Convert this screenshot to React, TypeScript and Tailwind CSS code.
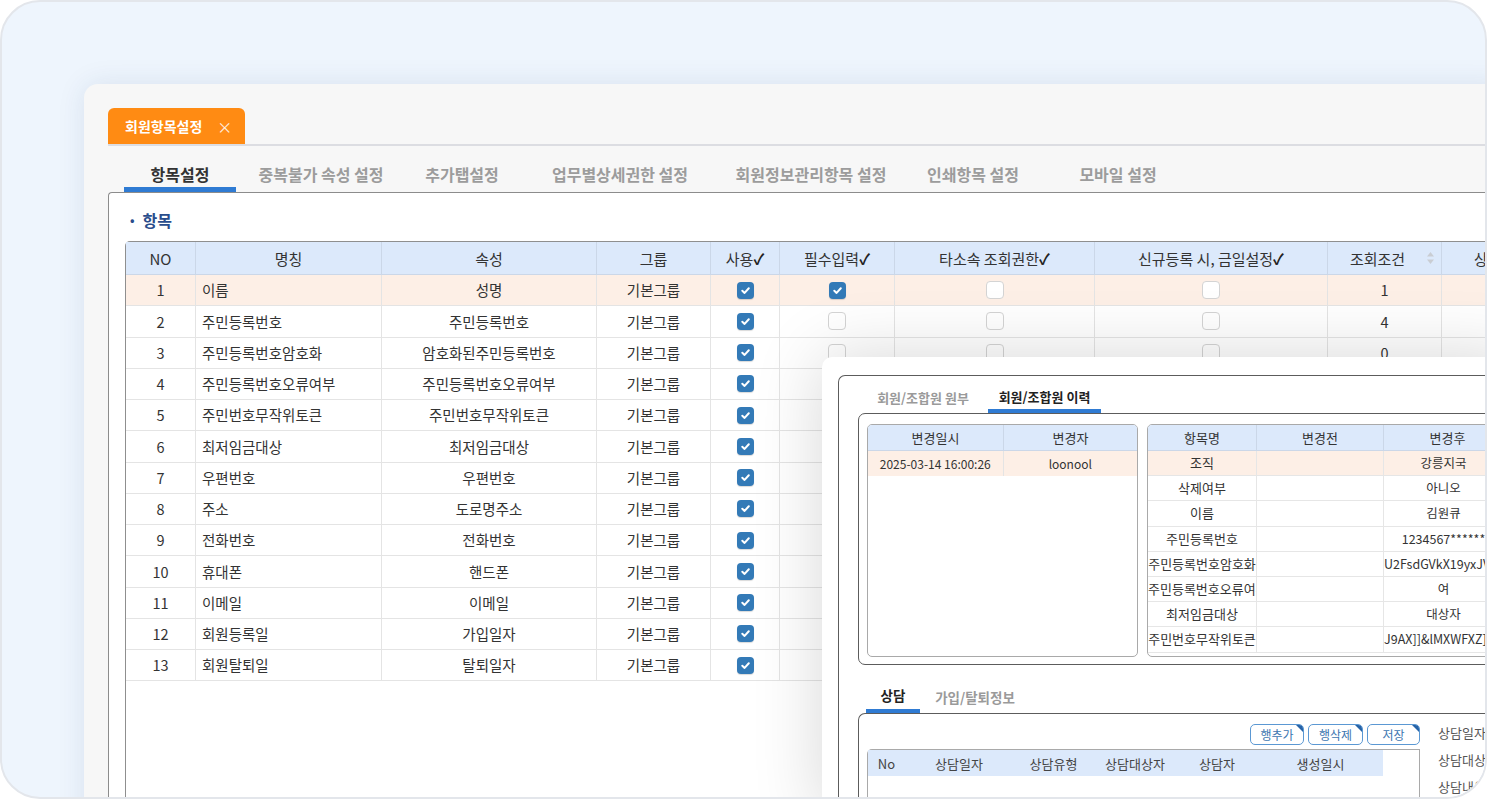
import React from 'react';

const FONT = { fontFamily: '"Noto Sans CJK KR", "Noto Sans", "Liberation Sans", sans-serif' };

const subTabs = [
  { label: '항목설정', w: 'w-[112px]', active: true },
  { label: '중복불가 속성 설정', w: 'w-[170px]' },
  { label: '추가탭설정', w: 'w-[112px]' },
  { label: '업무별상세권한 설정', w: 'w-[204px]' },
  { label: '회원정보관리항목 설정', w: 'w-[178px]' },
  { label: '인쇄항목 설정', w: 'w-[146px]' },
  { label: '모바일 설정', w: 'w-[144px]' },
];

const cols = [
  { label: 'NO', w: 'w-[70px]' },
  { label: '명칭', w: 'w-[186px]' },
  { label: '속성', w: 'w-[215px]' },
  { label: '그룹', w: 'w-[114px]' },
  { label: '사용', w: 'w-[69px]', check: true },
  { label: '필수입력', w: 'w-[115px]', check: true },
  { label: '타소속 조회권한', w: 'w-[200px]', check: true },
  { label: '신규등록 시, 금일설정', w: 'w-[233px]', check: true },
  { label: '조회조건', w: 'w-[114px]', sort: true },
  { label: '상세설정', w: 'w-[120px]' },
];

const rows = [
  ['1', '이름', '성명', '1'],
  ['2', '주민등록번호', '주민등록번호', '4'],
  ['3', '주민등록번호암호화', '암호화된주민등록번호', '0'],
  ['4', '주민등록번호오류여부', '주민등록번호오류여부', '0'],
  ['5', '주민번호무작위토큰', '주민번호무작위토큰', '0'],
  ['6', '최저임금대상', '최저임금대상', '0'],
  ['7', '우편번호', '우편번호', '0'],
  ['8', '주소', '도로명주소', '0'],
  ['9', '전화번호', '전화번호', '0'],
  ['10', '휴대폰', '핸드폰', '0'],
  ['11', '이메일', '이메일', '0'],
  ['12', '회원등록일', '가입일자', '0'],
  ['13', '회원탈퇴일', '탈퇴일자', '0'],
];

const history = [
  ['조직', '', '강릉지국'],
  ['삭제여부', '', '아니오'],
  ['이름', '', '김원큐'],
  ['주민등록번호', '', '1234567******'],
  ['주민등록번호암호화', '', 'U2FsdGVkX19yxJVyQk2mZ8'],
  ['주민등록번호오류여부', '', '여'],
  ['최저임금대상', '', '대상자'],
  ['주민번호무작위토큰', '', 'J9AX]]&lMXWFXZ]Q8kP'],
];

const Check = ({ on }: { on: boolean }) =>
  on ? (
    <span className="flex h-[17px] w-[17px] items-center justify-center rounded-[4px] bg-[#337ab7] shadow-[0_1px_1px_rgba(0,0,0,0.15)]">
      <svg className="h-[11px] w-[11px]" viewBox="0 0 12 12" fill="none" stroke="white" strokeWidth="2.2" strokeLinecap="round" strokeLinejoin="round">
        <path d="M2.5 6.3 5 8.6 9.6 3.6" />
      </svg>
    </span>
  ) : (
    <span className="block h-[18px] w-[18px] rounded-[4px] border border-[#d4d4d4] bg-white" />
  );

const MainPanel = () => (
  <div className="flex h-[760px] w-[1420px] flex-col rounded-tl-[14px] bg-[#f7f7f7] pl-[24px] pt-[24px] shadow-[0_0_28px_rgba(30,60,110,0.10)]">
    {/* 상단 탭 */}
    <div className="flex h-[38px] border-b-2 border-[#dcdde2]">
      <div className="flex h-[36px] w-[137px] items-center rounded-t-[6px] bg-[#ff8b13] pl-[17px] text-[14px] font-bold text-white">
        <span className="leading-none">회원항목설정</span>
        <span className="ml-[15px] text-[15px] font-normal leading-none text-[#fff1e2]">×</span>
      </div>
    </div>

    {/* 서브 탭 */}
    <div className="flex h-[46px] pl-[16px]">
      {subTabs.map((t) => (
        <div key={t.label} className={`relative flex h-full items-center justify-center pt-[10px] ${t.w}`}>
          <span className={`text-[16px] font-bold leading-none ${t.active ? 'text-[#333]' : 'text-[#9c9c9c]'}`}>{t.label}</span>
          {t.active && <span className="absolute bottom-0 left-0 h-[5px] w-full bg-[#2f7bd3]" />}
        </div>
      ))}
    </div>

    {/* 내용 */}
    <div className="flex-1 rounded-tl-[4px] border-l border-t border-[#8c8c8c] bg-white pl-[16px] pt-[15px]">
      <div className="mb-[9px] flex h-[24px] items-center pl-[5px] text-[16px] font-bold text-[#2a4d8c]">
        <span className="mr-[8px] text-[12px]">•</span>
        <span className="leading-none">항목</span>
      </div>

      <div className="h-[600px] rounded-tl-[5px] border-l border-t border-[#8f8f8f]">
        <div className="flex h-[33px] bg-[#dce9fb]">
          {cols.map((c) => (
            <div
              key={c.label}
              className={`relative flex shrink-0 items-center justify-center border-r border-b border-[#cbd7e8] text-[15px] text-[#333] ${c.w} ${c.sort ? 'pr-[14px]' : ''}`}
            >
              <span className="whitespace-nowrap leading-none">
                {c.label}
                {c.check && <span className="font-bold text-[#222]">✓</span>}
              </span>
              {c.sort && (
                <svg className="absolute right-[7px] top-1/2 h-[12px] w-[7px] -translate-y-1/2" viewBox="0 0 7 12" fill="#c9cdd3">
                  <path d="M3.5 0 7 4.5H0Z" />
                  <path d="M3.5 12 0 7.5H7Z" />
                </svg>
              )}
            </div>
          ))}
        </div>
        {rows.map((r, i) => (
          <div key={r[0]} className={`flex h-[31.25px] text-[14.5px] text-[#333] ${i === 0 ? 'bg-[#fdefe6]' : 'bg-transparent'}`}>
            <div className="flex w-[70px] shrink-0 items-center justify-center border-b border-r border-[#e4e4e4]">{r[0]}</div>
            <div className="flex w-[186px] shrink-0 items-center border-b border-r border-[#e4e4e4] pl-[6px]">{r[1]}</div>
            <div className="flex w-[215px] shrink-0 items-center justify-center border-b border-r border-[#e4e4e4]">{r[2]}</div>
            <div className="flex w-[114px] shrink-0 items-center justify-center border-b border-r border-[#e4e4e4]">기본그룹</div>
            <div className="flex w-[69px] shrink-0 items-center justify-center border-b border-r border-[#e4e4e4]">
              <Check on />
            </div>
            <div className="flex w-[115px] shrink-0 items-center justify-center border-b border-r border-[#e4e4e4]">
              <Check on={i === 0} />
            </div>
            <div className="flex w-[200px] shrink-0 items-center justify-center border-b border-r border-[#e4e4e4]">
              <Check on={false} />
            </div>
            <div className="flex w-[233px] shrink-0 items-center justify-center border-b border-r border-[#e4e4e4]">
              <Check on={false} />
            </div>
            <div className="flex w-[114px] shrink-0 items-center justify-center border-b border-r border-[#e4e4e4]">{r[3]}</div>
            <div className="w-[120px] shrink-0 border-b border-r border-[#e4e4e4]" />
          </div>
        ))}
      </div>
    </div>
  </div>
);

const GridHead = ({ items }: { items: [string, string][] }) => (
  <div className="flex h-[26px]">
    {items.map(([label, w]) => (
      <div key={label} className={`flex shrink-0 items-center justify-center border-b border-r border-[#cbd7e8] bg-[#dce9fb] text-[13px] text-[#333] ${w}`}>
        <span className="leading-none">{label}</span>
      </div>
    ))}
  </div>
);

const HistoryPanel = () => (
  <div className="absolute left-[820px] top-[355px] h-[460px] w-[700px] rounded-tl-[10px] bg-white pl-[16px] pt-[18px] shadow-[0_0_70px_rgba(0,0,0,0.16)]">
    <div className="h-full rounded-tl-[7px] border-l border-t border-[#5c5c5c] pl-[19px]">
      {/* 원부 / 이력 탭 */}
      <div className="flex h-[37px]">
        <div className="flex w-[130px] items-center justify-center pt-[6px] text-[13px] font-bold text-[#9a9a9a]">
          <span className="leading-none">회원/조합원 원부</span>
        </div>
        <div className="relative flex w-[113px] items-center justify-center pt-[4px] text-[13px] font-bold text-[#222]">
          <span className="leading-none">회원/조합원 이력</span>
          <span className="absolute bottom-0 left-0 h-[4px] w-full bg-[#2f7bd3]" />
        </div>
      </div>

      <div className="flex h-[252px] gap-[9px] rounded-[7px] border border-[#5c5c5c] pb-[7px] pl-[8px] pt-[10px]">
        <div className="h-[233px] w-[271px] shrink-0 overflow-hidden rounded-[5px] border border-[#a9a9a9]">
          <GridHead items={[['변경일시', 'w-[136px]'], ['변경자', 'w-[134px]']]} />
          <div className="flex h-[25px] bg-[#fdefe6] text-[12px] text-[#333]">
            <div className="flex w-[136px] items-center justify-center border-r border-[#e4e4e4]">2025-03-14 16:00:26</div>
            <div className="flex w-[134px] items-center justify-center">loonool</div>
          </div>
        </div>
        <div className="h-[233px] w-[420px] shrink-0 overflow-hidden rounded-[5px] border border-[#a9a9a9]">
          <GridHead items={[['항목명', 'w-[109px]'], ['변경전', 'w-[127px]'], ['변경후', 'w-[128px]']]} />
          {history.map((h, i) => (
            <div key={h[0]} className={`flex h-[25.2px] text-[13px] text-[#333] ${i === 0 ? 'bg-[#fdefe6]' : ''}`}>
              <div className="w-[109px] shrink-0 overflow-hidden whitespace-nowrap border-b border-r border-[#e6e6e6] text-center leading-[24px]">{h[0]}</div>
              <div className="w-[127px] shrink-0 border-b border-r border-[#e6e6e6]" />
              <div className="w-[128px] shrink-0 overflow-hidden whitespace-nowrap border-b border-r border-[#e6e6e6] pr-[8px] text-center text-[12.5px] leading-[24px]">{h[2]}</div>
            </div>
          ))}
        </div>
      </div>

      {/* 상담 탭 */}
      <div className="flex h-[48px] pl-[8px]">
        <div className="relative flex w-[54px] items-end justify-center pb-[11px] text-[13.5px] font-bold text-[#222]">
          <span className="leading-none">상담</span>
          <span className="absolute bottom-0 left-0 h-[4px] w-full bg-[#2f7bd3]" />
        </div>
        <div className="flex w-[110px] items-end justify-center pb-[9px] text-[13.5px] font-bold text-[#9a9a9a]">
          <span className="leading-none">가입/탈퇴정보</span>
        </div>
      </div>

      <div className="flex h-[120px] rounded-tl-[7px] border-l border-t border-[#5c5c5c] pl-[8px]">
        <div className="w-[553px] shrink-0 pt-[10px]">
          <div className="flex justify-end gap-[4px]">
            {[['행추가', 'w-[54px]'], ['행삭제', 'w-[55px]'], ['저장', 'w-[53px]']].map(([b, w]) => (
              <div key={b} className={`relative flex h-[21px] items-center justify-center overflow-hidden rounded-[5px] border border-[#5b98d3] text-[12px] text-[#3d76b0] ${w}`}>
                <span className="leading-none">{b}</span>
                <span className="absolute right-0 top-0 h-0 w-0 border-l-[7px] border-t-[7px] border-l-transparent border-t-[#2563a8]" />
              </div>
            ))}
          </div>
          <div className="mt-[4px] h-[80px] rounded-tl-[5px] border-l border-r border-t border-[#a9a9a9]">
            <div className="flex h-[26px]">
              {[['No', 'w-[37px]'], ['상담일자', 'w-[108px]'], ['상담유형', 'w-[81px]'], ['상담대상자', 'w-[82px]'], ['상담자', 'w-[82px]'], ['생성일시', 'w-[125px]']].map(([l, w]) => (
                <div key={l} className={`flex shrink-0 items-center justify-center bg-[#dce9fb] text-[13px] text-[#444] ${w}`}>
                  <span className="leading-none">{l}</span>
                </div>
              ))}
            </div>
          </div>
        </div>
        <div className="ml-[18px] flex flex-col gap-[9px] pt-[10px] text-[13px] leading-[18px] text-[#555]">
          <span>상담일자</span>
          <span>상담대상</span>
          <span>상담내용</span>
        </div>
      </div>
    </div>
  </div>
);

export default function App() {
  return (
    <div className="h-[800px] w-[1488px] bg-white" style={FONT}>
      <div className="relative h-[799px] w-[1487px] overflow-hidden rounded-[40px] border-2 border-[#e3e6eb] bg-[#eef5fd] pl-[82px] pt-[82px]">
        <MainPanel />
        <HistoryPanel />
      </div>
    </div>
  );
}
